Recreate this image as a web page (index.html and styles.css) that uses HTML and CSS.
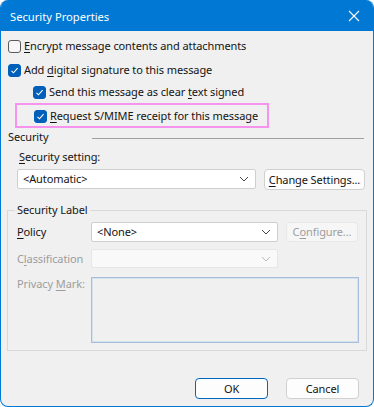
FILE: index.html
```html
<!DOCTYPE html>
<html lang="en">
<head>
   <meta charset="UTF-8">
   <meta name="viewport" content="width=device-width, initial-scale=1.0">
   <title>Security Properties</title>
   <link rel="stylesheet" href="styles.css">
</head>
<body>
<div class="window">
   <div class="titlebar">
      <span class="title">Security Properties</span>
      <svg class="close" width="12" height="12" viewBox="0 0 12 12">
         <path d="M1 1 L11 11 M11 1 L1 11" stroke="#fff" stroke-width="1.1" fill="none"/>
      </svg>
   </div>

   <div class="content">
      <div class="check row1">
         <span class="box"></span>
         <span><u>E</u>ncrypt message contents and attachments</span>
      </div>
      <div class="check row2">
         <span class="box on"><svg width="9" height="9" viewBox="0 0 9 9"><path d="M1.5 4.8 L3.5 6.8 L7.6 2.2" stroke="#fff" stroke-width="1.1" fill="none"/></svg></span>
         <span>Add <u>d</u>igital signature to this message</span>
      </div>
      <div class="check row3 sub">
         <span class="box on"><svg width="9" height="9" viewBox="0 0 9 9"><path d="M1.5 4.8 L3.5 6.8 L7.6 2.2" stroke="#fff" stroke-width="1.1" fill="none"/></svg></span>
         <span>Send this message as clear <u>t</u>ext signed</span>
      </div>
      <div class="highlight">
         <div class="check">
            <span class="box on"><svg width="9" height="9" viewBox="0 0 9 9"><path d="M1.5 4.8 L3.5 6.8 L7.6 2.2" stroke="#fff" stroke-width="1.1" fill="none"/></svg></span>
            <span><u>R</u>equest S/MIME receipt for this message</span>
         </div>
      </div>

      <div class="section-head">
         <span class="section-name">Security</span>
         <span class="rule"></span>
      </div>
      <div class="setting-label"><u>S</u>ecurity setting:</div>
      <div class="setting-row">
         <div class="combo wide">
            <span>&lt;Automatic&gt;</span>
            <svg width="10" height="6" viewBox="0 0 10 6"><path d="M1 1 L5 5 L9 1" stroke="#444" stroke-width="1" fill="none"/></svg>
         </div>
         <button class="btn change"><u>C</u>hange Settings...</button>
      </div>

      <fieldset class="group">
         <legend>Security Label</legend>
         <div class="field policy">
            <span class="field-label"><u>P</u>olicy</span>
            <div class="combo mid">
               <span>&lt;None&gt;</span>
               <svg width="10" height="6" viewBox="0 0 10 6"><path d="M1 1 L5 5 L9 1" stroke="#444" stroke-width="1" fill="none"/></svg>
            </div>
            <button class="btn disabled">C<u>o</u>nfigure...</button>
         </div>
         <div class="field classification">
            <span class="field-label dim">C<u>l</u>assification</span>
            <div class="combo mid off">
               <span></span>
               <svg width="10" height="6" viewBox="0 0 10 6"><path d="M1 1 L5 5 L9 1" stroke="#bcbcbc" stroke-width="1" fill="none"/></svg>
            </div>
         </div>
         <div class="field privacy">
            <span class="field-label dim">Privacy <u>M</u>ark:</span>
            <div class="memo"></div>
         </div>
      </fieldset>

      <div class="footer">
         <button class="btn default">OK</button>
         <button class="btn">Cancel</button>
      </div>
   </div>
</div>
</body>
</html>
```

FILE: styles.css
```css
body {
   margin: 0;
   padding: 0;
   background-color: #fff;
   font-family: "Noto Sans", "Open Sans", sans-serif;
   font-size: 11px;
   letter-spacing: -0.1px;
   color: #141414;
   white-space: nowrap;
}
.window {
   width: 374px;
   height: 407px;
   box-sizing: border-box;
   background-color: #f0f0f0;
   border: 1px solid #0078d4;
   border-top: none;
   border-radius: 8px;
   overflow: hidden;
   display: flex;
   flex-direction: column;
}
.titlebar {
   height: 31px;
   background-color: #0078d4;
   color: white;
   display: flex;
   align-items: center;
   justify-content: space-between;
   padding: 0 9px 0 9px;
   flex-shrink: 0;
}
.title {
   font-size: 11.2px;
   letter-spacing: 0;
   margin-top: 1px;
}
.close {
   margin-right: 4px;
   margin-top: 1px;
}
.content {
   flex: 1;
   display: flex;
   flex-direction: column;
   padding: 0 6px;
   line-height: 16px;
}
u {
   text-decoration-thickness: 1px;
   text-underline-offset: 2px;
}
.check {
   display: flex;
   align-items: center;
   gap: 3px;
   height: 16px;
}
.row1 {
   margin-top: 7px;
   padding-left: 1px;
}
.row2 {
   margin-top: 8px;
   padding-left: 1px;
}
.row3 {
   margin-top: 6px;
}
.sub {
   padding-left: 26px;
}
.box {
   width: 13px;
   height: 13px;
   box-sizing: border-box;
   border-radius: 3px;
   border: 1px solid #5a5a5a;
   background-color: #f7f7f7;
   display: flex;
   align-items: center;
   justify-content: center;
   flex-shrink: 0;
}
.box.on {
   background-color: #005fb8;
   border-color: #005fb8;
}
.highlight {
   margin-top: 3px;
   margin-left: 8px;
   border: 2px solid #f593ef;
   padding: 3px 0 2px 17px;
   box-sizing: content-box;
   width: 233px;
}
.section-head {
   display: flex;
   align-items: center;
   margin-top: 1px;
   padding-left: 1px;
}
.section-name {
   width: 84px;
}
.rule {
   flex: 1;
   height: 1px;
   background-color: #a0a0a0;
   margin-right: 3px;
   margin-top: 2px;
}
.setting-label {
   margin-top: 4px;
   padding-left: 12px;
}
.setting-row {
   display: flex;
   gap: 8px;
   margin-top: 4px;
   padding-left: 10px;
}
.combo {
   height: 20px;
   box-sizing: border-box;
   background-color: #fff;
   border: 1px solid #cfcfcf;
   border-radius: 2px;
   display: flex;
   align-items: center;
   justify-content: space-between;
   padding: 0 6px 0 5px;
}
.combo.wide {
   width: 239px;
}
.combo.mid {
   width: 187px;
}
.combo.off {
   background-color: #f9f9f9;
   border-color: #e6e6e6;
}
.btn {
   font-family: inherit;
   font-size: 11px;
   letter-spacing: -0.1px;
   color: #141414;
   height: 21px;
   box-sizing: border-box;
   background-color: #fdfdfd;
   border: 1px solid #d0d0d0;
   border-radius: 4px;
   padding: 0 3px;
   line-height: 16px;
   white-space: nowrap;
}
.btn.change {
   width: 101px;
}
.btn.disabled {
   color: #9d9d9d;
   background-color: #f6f6f6;
   border-color: #e8e8e8;
   width: 72px;
   height: 20px;
}
.btn.default {
   border-color: #0067c0;
}
.group {
   margin: 12px 0 0 0;
   padding: 0 0 7px 0;
   border: 1px solid #d9d9d9;
   width: 360px;
   box-sizing: border-box;
}
.group legend {
   margin-left: 7px;
   padding: 0 2px;
   line-height: 16px;
}
.field {
   display: flex;
   align-items: center;
   padding-left: 9px;
}
.field-label {
   width: 74px;
}
.dim {
   color: #9d9d9d;
}
.policy {
   margin-top: 4px;
}
.policy .btn {
   margin-left: 8px;
}
.classification {
   margin-top: 7px;
}
.classification .combo {
   height: 19px;
}
.privacy {
   margin-top: 9px;
   align-items: flex-start;
}
.privacy .field-label {
   margin-top: -1px;
}
.memo {
   width: 268px;
   height: 66px;
   box-sizing: border-box;
   border: 1px solid #a7bedb;
   box-shadow: inset 0 0 0 1px #d6e1ee;
   background-color: #f0f0f0;
}
.footer {
   display: flex;
   justify-content: flex-end;
   gap: 18px;
   margin-top: 27px;
   padding-right: 8px;
}
.footer .btn {
   width: 73px;
   height: 21px;
}
```
